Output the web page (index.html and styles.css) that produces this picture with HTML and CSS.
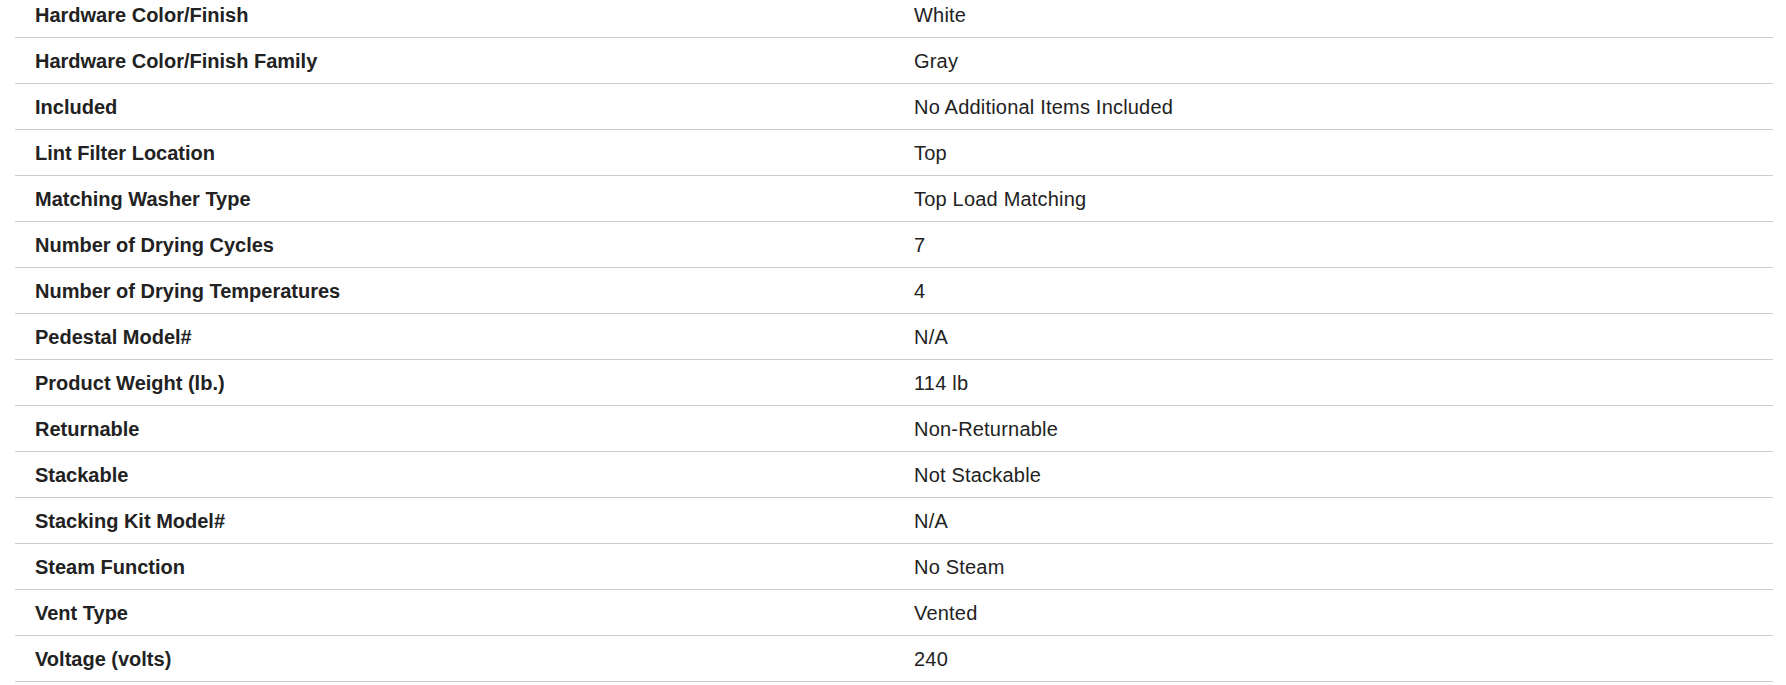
FILE: index.html
```html
<!DOCTYPE html>
<html lang="en">
<head>
<meta charset="utf-8">
<title>Specifications</title>
<link rel="stylesheet" href="styles.css">
</head>
<body>
<div class="specs">
  <div class="spec-row"><div class="spec-label">Hardware Color/Finish</div><div class="spec-value">White</div></div>
  <div class="spec-row"><div class="spec-label">Hardware Color/Finish Family</div><div class="spec-value">Gray</div></div>
  <div class="spec-row"><div class="spec-label">Included</div><div class="spec-value">No Additional Items Included</div></div>
  <div class="spec-row"><div class="spec-label">Lint Filter Location</div><div class="spec-value">Top</div></div>
  <div class="spec-row"><div class="spec-label">Matching Washer Type</div><div class="spec-value">Top Load Matching</div></div>
  <div class="spec-row"><div class="spec-label">Number of Drying Cycles</div><div class="spec-value">7</div></div>
  <div class="spec-row"><div class="spec-label">Number of Drying Temperatures</div><div class="spec-value">4</div></div>
  <div class="spec-row"><div class="spec-label">Pedestal Model#</div><div class="spec-value">N/A</div></div>
  <div class="spec-row"><div class="spec-label">Product Weight (lb.)</div><div class="spec-value">114 lb</div></div>
  <div class="spec-row"><div class="spec-label">Returnable</div><div class="spec-value">Non-Returnable</div></div>
  <div class="spec-row"><div class="spec-label">Stackable</div><div class="spec-value">Not Stackable</div></div>
  <div class="spec-row"><div class="spec-label">Stacking Kit Model#</div><div class="spec-value">N/A</div></div>
  <div class="spec-row"><div class="spec-label">Steam Function</div><div class="spec-value">No Steam</div></div>
  <div class="spec-row"><div class="spec-label">Vent Type</div><div class="spec-value">Vented</div></div>
  <div class="spec-row"><div class="spec-label">Voltage (volts)</div><div class="spec-value">240</div></div>
</div>
</body>
</html>
```
FILE: styles.css
```css
html, body {
  margin: 0;
  padding: 0;
  background: #ffffff;
}

body {
  font-family: "Liberation Sans", Arial, Helvetica, sans-serif;
  font-size: 20px;
  color: #222222;
}

.specs {
  margin: -8px 13px 0 15px;
}

.spec-row {
  display: grid;
  grid-template-columns: 1fr 1fr;
  align-items: center;
  height: 45px;
  border-bottom: 1px solid #cccccc;
}

.spec-label {
  padding: 2px 0 0 20px;
  font-weight: 700;
}

.spec-value {
  padding: 2px 0 0 20px;
  font-weight: 400;
  letter-spacing: 0.2px;
}
```
